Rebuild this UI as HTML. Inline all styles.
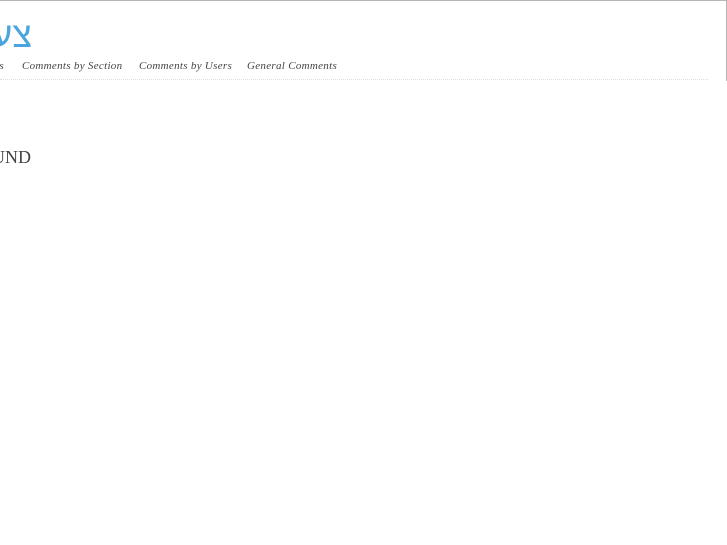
<!DOCTYPE html>
<html><head><meta charset="utf-8"><style>
html,body{margin:0;padding:0;width:727px;height:545px;overflow:hidden;background:#fff;position:relative}
.box{position:absolute;left:-20px;top:0;width:746px;height:80px;border-top:1px solid #b5b5b5;border-right:1px solid #b5b5b5}
.line{position:absolute;left:0;top:79px;width:708px;border-top:1px dotted #ddd}
.logo{position:absolute;right:695px;top:13px;font:normal 36px "Liberation Sans","Noto Sans CJK SC",sans-serif;color:#4aa5de;direction:rtl;white-space:nowrap;line-height:44px}
.nav{position:absolute;top:60px;font:italic 11px "Liberation Serif",serif;color:#444;white-space:nowrap;letter-spacing:0.3px}
.nf{position:absolute;top:147px;left:-8px;font:18px "Liberation Serif",serif;color:#444}
</style></head><body>
<div class="box"></div>
<div class="line"></div>
<div class="logo">צע</div>
<div class="nav" style="left:-4px">ts</div>
<div class="nav" style="left:22px">Comments by Section</div>
<div class="nav" style="left:139px">Comments by Users</div>
<div class="nav" style="left:247px">General Comments</div>
<div class="nf">UND</div>
</body></html>
